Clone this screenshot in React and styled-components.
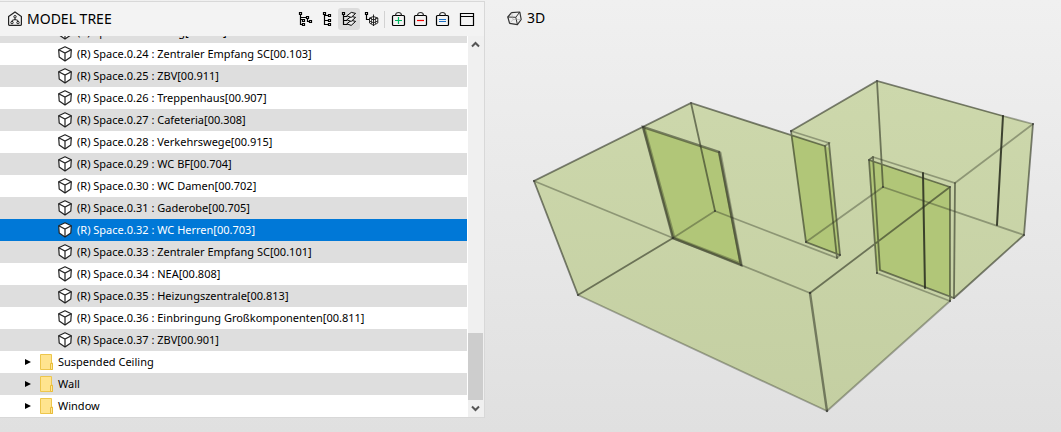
import React, { useState } from "react";
import styled, { createGlobalStyle } from "styled-components";

const spaces = [
  { id: "2.24", name: "Gang[02.901]" },
  { id: "0.24", name: "Zentraler Empfang SC[00.103]" },
  { id: "0.25", name: "ZBV[00.911]" },
  { id: "0.26", name: "Treppenhaus[00.907]" },
  { id: "0.27", name: "Cafeteria[00.308]" },
  { id: "0.28", name: "Verkehrswege[00.915]" },
  { id: "0.29", name: "WC BF[00.704]" },
  { id: "0.30", name: "WC Damen[00.702]" },
  { id: "0.31", name: "Gaderobe[00.705]" },
  { id: "0.32", name: "WC Herren[00.703]" },
  { id: "0.33", name: "Zentraler Empfang SC[00.101]" },
  { id: "0.34", name: "NEA[00.808]" },
  { id: "0.35", name: "Heizungszentrale[00.813]" },
  { id: "0.36", name: "Einbringung Großkomponenten[00.811]" },
  { id: "0.37", name: "ZBV[00.901]" },
];

const folders = ["Suspended Ceiling", "Wall", "Window"];

// faces of the room, the doors and the window
const shell =
  "534,181 691,103 791,135 791,131 877,81 1033,124 1024,235 954,298 950,301 827,411 578,295";

const openings = [
  "643,127 719,152 741,265 673,238",
  "791,135 825,146 829,148 840,255 806,242",
  "869,160 950,187 950,296 880,270 877,272",
];

const lightEdges = [
  "M534 181L673 238",
  "M715 211L837 258",
  "M741 265L810 293",
  "M578 295L827 411",
  "M827 411L950 301",
  "M791 131L829 143L825 146",
  "M873 157L955 183L1033 124",
  "M883 187L806 242",
  "M883 187L1024 235",
  "M877 273L950 301",
  "M673 238L715 211",
  "M1003 116L1033 124",
  "M837 258L840 255",
];

const edges = [
  "M578 295L534 181L691 103L825 146",
  "M691 103L715 211",
  "M578 295L673 238",
  "M791 131L877 81L1003 116",
  "M877 81L883 187",
  "M791 131L806 242L840 255",
  "M825 146L837 258",
  "M829 143L840 255",
  "M1033 124L1024 235L954 298",
  "M955 183L954 298",
  "M873 157L869 160L877 273",
  "M873 157L880 270L954 298",
  "M869 160L950 187",
  "M950 187L950 301",
  "M950 187L810 293",
];

const strongEdges = [
  "M643 127L719 152L741 265L673 238Z",
  "M810 293L827 411",
];

const darkEdges = ["M1003 116L997 225", "M923 173L925 288"];

const corners = [
  [534, 181], [578, 295], [691, 103], [643, 127], [719, 152], [741, 265],
  [673, 238], [715, 211], [791, 131], [806, 242], [840, 255], [877, 81],
  [1033, 124], [1024, 235], [954, 298], [950, 301], [950, 187], [810, 293],
  [827, 411], [869, 160], [883, 187], [877, 273],
];

function CubeIcon() {
  return (
    <svg width="14" height="16" viewBox="0 0 14 16" aria-hidden="true">
      <path
        d="M7 .8L13.3 3.8L12.8 11L7 15L1.2 11L.7 3.8Z"
        fill="#fff"
        stroke="#222"
        strokeWidth="1.2"
        strokeLinejoin="round"
      />
      <path d="M.7 3.8L7 7L13.3 3.8M7 7V15" fill="none" stroke="#222" strokeWidth="1.2" />
    </svg>
  );
}

function FolderIcon() {
  return (
    <svg width="13" height="16" viewBox="0 0 13 16" aria-hidden="true">
      <path d="M.5 .5H11.5V9H12.5V15.5H.5Z" fill="#ffe48f" stroke="#edc64c" />
      <path d="M10.5 15.5V9.5H12.5V15.5Z" fill="#ffe79a" stroke="#e9bd3a" />
    </svg>
  );
}

function HouseIcon() {
  return (
    <svg width="14" height="16" viewBox="0 0 14 16" fill="none" stroke="#222" aria-hidden="true">
      <path d="M.6 5.5L7 1L13.4 5.5V13.6Q13.4 14.4 12.6 14.4H1.4Q.6 14.4 .6 13.6Z" strokeWidth="1.2" />
      <path d="M7 7V9M4.2 11V9.3L7 8.6L9.8 9.3V11" />
      <circle cx="7" cy="5.7" r="1.2" />
      <circle cx="4" cy="11.6" r="1.2" />
      <circle cx="10" cy="11.6" r="1.2" />
    </svg>
  );
}

function ToolSvg({ children }) {
  return (
    <svg width="22" height="22" viewBox="0 0 22 22" fill="none" stroke="#000" aria-hidden="true">
      {children}
    </svg>
  );
}

function Bag({ mark, color }) {
  return (
    <ToolSvg>
      <rect x="4.5" y="7.5" width="12" height="10" rx="1" strokeWidth="1.2" />
      <path d="M7.5 7.5C7.5 3.5 13.5 3.5 13.5 7.5" stroke="#333" strokeWidth="1.2" />
      <path d={mark} stroke={color} strokeWidth="1.2" />
    </ToolSvg>
  );
}

const treeTools = [
  {
    label: "Collapse tree",
    icon: (
      <ToolSvg>
        <path d="M5.5 4.5H7.5V6.5H5.5ZM6.5 6.5V16.5H8.5M6.5 11.5H8.5M6.5 9.5H12.5" strokeWidth="1.2" />
        <path d="M8.5 11.5H10.5V13.5H8.5ZM8.5 15.5H10.5V17.5H8.5ZM12.5 8.5H14.5V10.5H12.5ZM13.5 10.5V13.5H15.5M15.5 12.5H17.5V14.5H15.5Z" strokeWidth="1.2" />
      </ToolSvg>
    ),
  },
  {
    label: "Expand tree",
    icon: (
      <ToolSvg>
        <path d="M7.5 4.5H9.5V6.5H7.5ZM8.5 6.5V16.5H12.5M8.5 7.5H12.5M8.5 12.5H12.5" strokeWidth="1.2" />
        <path d="M12.5 6.5H14.5V8.5H12.5ZM12.5 11.5H14.5V13.5H12.5ZM12.5 15.5H14.5V17.5H12.5Z" strokeWidth="1.2" />
      </ToolSvg>
    ),
  },
  {
    label: "Group by layer",
    active: true,
    icon: (
      <ToolSvg>
        <path d="M4.5 4.5H6.5V6.5H4.5ZM5.5 6.5V16.5H9.5M5.5 8.5H9M5.5 12.5H9" strokeWidth="1.2" />
        <g fill="#eee" strokeLinejoin="round">
          <path d="M8.8 15.8L13.3 12.4L17.6 13.4L13.2 17.4Z" />
          <path d="M8.8 11.8L13.3 8.4L17.6 9.4L13.2 13.4Z" />
          <path d="M8.8 7.8L13.3 4.4L17.6 5.4L13.2 9.4Z" />
        </g>
      </ToolSvg>
    ),
  },
  {
    label: "Group by component",
    icon: (
      <ToolSvg>
        <path d="M5.5 4.5H7.5V6.5H5.5ZM6.5 6.5V11.5H9.5" strokeWidth="1.2" />
        <path d="M13.5 8.5L17.8 10V15L13.5 17.3L9.5 15V10ZM9.5 10L13.5 12L17.8 10M13.5 6.5V18M9.5 13L13.5 14.8L17.8 13" strokeWidth=".8" />
        <path d="M11.5 9.5V16M15.5 9.5V16" strokeWidth=".6" />
      </ToolSvg>
    ),
  },
];

const basketTools = [
  { label: "Add to basket", icon: <Bag mark="M10.5 9V16M7 12.5H14" color="#00b862" /> },
  { label: "Remove from basket", icon: <Bag mark="M7 12.5H14" color="#f00000" /> },
  { label: "Set as basket", icon: <Bag mark="M7 11.5H14M7 13.5H14" color="#1b6ec2" /> },
];

function ModelTree() {
  const [selected, setSelected] = useState("0.32");

  return (
    <Panel>
      <PanelHeader>
        <HouseIcon />
        <Title>MODEL TREE</Title>
        <Toolbar>
          {treeTools.map((tool) => (
            <ToolButton key={tool.label} aria-label={tool.label} $active={tool.active}>
              {tool.icon}
            </ToolButton>
          ))}
          <Separator />
          {basketTools.map((tool) => (
            <ToolButton key={tool.label} aria-label={tool.label}>
              {tool.icon}
            </ToolButton>
          ))}
        </Toolbar>
        <ToolButton aria-label="Maximize">
          <ToolSvg>
            <path d="M4.5 5.5H17.5V17.5H4.5ZM4.5 8.5H17.5" strokeWidth="1.2" />
          </ToolSvg>
        </ToolButton>
      </PanelHeader>
      <PanelBody>
        <Tree role="tree" aria-label="Model tree">
          {spaces.map((space) => (
            <Row
              key={space.id}
              role="treeitem"
              aria-selected={selected === space.id}
              $level={2}
              $selected={selected === space.id}
              onClick={() => setSelected(space.id)}
            >
              <CubeIcon />
              <span>{`(R) Space.${space.id} : ${space.name}`}</span>
            </Row>
          ))}
          {folders.map((folder) => (
            <Row key={folder} role="treeitem" aria-expanded="false" $level={1}>
              <Expander aria-label={`Expand ${folder}`}>
                <svg width="6" height="6" viewBox="0 0 6 6" aria-hidden="true">
                  <path d="M0 0L6 3L0 6Z" fill="#000" />
                </svg>
              </Expander>
              <FolderIcon />
              <span>{folder}</span>
            </Row>
          ))}
        </Tree>
        <Scrollbar>
          <ScrollButton aria-label="Scroll up">
            <svg width="9" height="7" viewBox="0 0 9 7" aria-hidden="true">
              <path d="M1 5.5L4.5 2L8 5.5" fill="none" stroke="#555" strokeWidth="2" />
            </svg>
          </ScrollButton>
          <Track>
            <Thumb />
          </Track>
          <ScrollButton aria-label="Scroll down">
            <svg width="9" height="7" viewBox="0 0 9 7" aria-hidden="true">
              <path d="M1 1.5L4.5 5L8 1.5" fill="none" stroke="#555" strokeWidth="2" />
            </svg>
          </ScrollButton>
        </Scrollbar>
      </PanelBody>
    </Panel>
  );
}

function Viewer() {
  return (
    <View>
      <ViewHeader>
        <svg width="15" height="15" viewBox="0 0 15 15" fill="none" stroke="#333" aria-hidden="true">
          <path d="M.8 6L4.5 1.6L12.8 1L14.2 8.5L10.4 13.6L2.6 12.4Z" strokeWidth="1.2" strokeLinejoin="round" />
          <path d="M.8 6L8.8 6.3L12.8 1M8.8 6.3L10.4 13.6" />
          <path d="M4.5 1.6L6 8.6L2.6 12.4M6 8.6L14.2 8.5" stroke="#999" strokeWidth=".5" />
        </svg>
        <Title>3D</Title>
      </ViewHeader>
      <Scene viewBox="485 36 576 396" role="img" aria-label="Selected space">
        <defs>
          <linearGradient id="glass" x1="0" y1="0" x2="0" y2="1">
            <stop offset="0" stopColor="#cdd8ac" />
            <stop offset="1" stopColor="#c4cfa2" />
          </linearGradient>
        </defs>
        <polygon points={shell} fill="url(#glass)" />
        {openings.map((points) => (
          <polygon key={points} points={points} fill="#b1c678" />
        ))}
        <g fill="none" stroke="#2d3222" strokeLinecap="round">
          <path d={lightEdges.join("")} strokeWidth="1.8" opacity=".38" />
          <path d={edges.join("")} strokeWidth="1.8" opacity=".6" />
          <path d={strongEdges.join("")} strokeWidth="2.4" opacity=".55" />
          <path d="M644 128L674 238L741 264L720 153" strokeWidth="3.2" opacity=".35" />
          <path d={darkEdges.join("")} strokeWidth="2" opacity=".9" />
        </g>
        {corners.map(([x, y]) => (
          <circle key={`${x}-${y}`} cx={x} cy={y} r="1" fill="#333" opacity=".6" />
        ))}
      </Scene>
    </View>
  );
}

function App() {
  return (
    <>
      <GlobalStyle />
      <Layout>
        <ModelTree />
        <Viewer />
      </Layout>
    </>
  );
}

const GlobalStyle = createGlobalStyle`
  * {
    box-sizing: border-box;
  }

  body {
    margin: 0;
    font-family: "Noto Sans", "Open Sans", sans-serif;
    font-size: 11px;
    color: #000;
  }

  button {
    border: none;
    background: none;
    padding: 0;
  }

  svg {
    display: block;
    flex: none;
  }
`;

const Layout = styled.main`
  display: grid;
  grid-template-columns: 16fr 19fr;
  height: 100vh;
  background: linear-gradient(#f0f0f0, #e0e0e0);
`;

// model tree panel
const Panel = styled.section`
  display: flex;
  flex-direction: column;
  min-width: 0;
  min-height: 0;
  margin: 1px 0 14px;
  background: #f3f3f3;
  border: 1px solid #d8d8d8;
  border-left: none;
`;

const PanelHeader = styled.header`
  display: flex;
  align-items: center;
  flex: none;
  height: 34px;
  padding: 0 6px 0 8px;
`;

const Title = styled.h2`
  margin: 0 0 0 5px;
  font-size: 14px;
  font-weight: 400;
  line-height: 20px;
`;

const Toolbar = styled.div`
  display: flex;
  align-items: center;
  margin: 0 2px 0 auto;
`;

const ToolButton = styled.button`
  width: 22px;
  height: 22px;
  border-radius: 3px;
  background: ${(props) => (props.$active ? "#dcdcdc" : "transparent")};
`;

const Separator = styled.span`
  width: 1px;
  height: 17px;
  margin: 0 3px 0 2px;
  background: #d2d2d2;
`;

const PanelBody = styled.div`
  display: flex;
  flex: 1;
  min-height: 0;
  background: #fff;
`;

// the list is scrolled to its end
const Tree = styled.ul`
  display: flex;
  flex-direction: column;
  justify-content: flex-end;
  flex: 1;
  min-width: 0;
  margin: 0 1px 0 0;
  padding: 0;
  overflow: hidden;
  list-style: none;
`;

const Row = styled.li`
  display: flex;
  align-items: center;
  flex: none;
  gap: 5px;
  height: 22px;
  padding-left: ${(props) => (props.$level === 2 ? 58 : 25)}px;
  line-height: 16px;
  white-space: nowrap;
  background: ${(props) => (props.$selected ? "#0078d7" : "#fff")};
  color: ${(props) => (props.$selected ? "#fff" : "#000")};

  &:nth-child(odd) {
    background: ${(props) => (props.$selected ? "#0078d7" : "#dedede")};
  }
`;

const Expander = styled.button`
  width: 10px;
`;

const Scrollbar = styled.div`
  display: flex;
  flex-direction: column;
  width: 16px;
  padding-right: 1px;
  background: #f0f0f0;
`;

const ScrollButton = styled.button`
  display: flex;
  align-items: center;
  justify-content: center;
  height: 17px;
`;

const Track = styled.div`
  display: flex;
  flex-direction: column;
  justify-content: flex-end;
  flex: 1;
`;

const Thumb = styled.div`
  height: 67px;
  background: #cdcdcd;
`;

// 3D view
const View = styled.section`
  display: flex;
  flex-direction: column;
  min-width: 0;
  min-height: 0;
`;

const ViewHeader = styled.header`
  display: flex;
  align-items: center;
  flex: none;
  height: 36px;
  padding-left: 22px;
`;

const Scene = styled.svg`
  flex: 1;
  width: 100%;
  min-height: 0;
`;

export default App;
